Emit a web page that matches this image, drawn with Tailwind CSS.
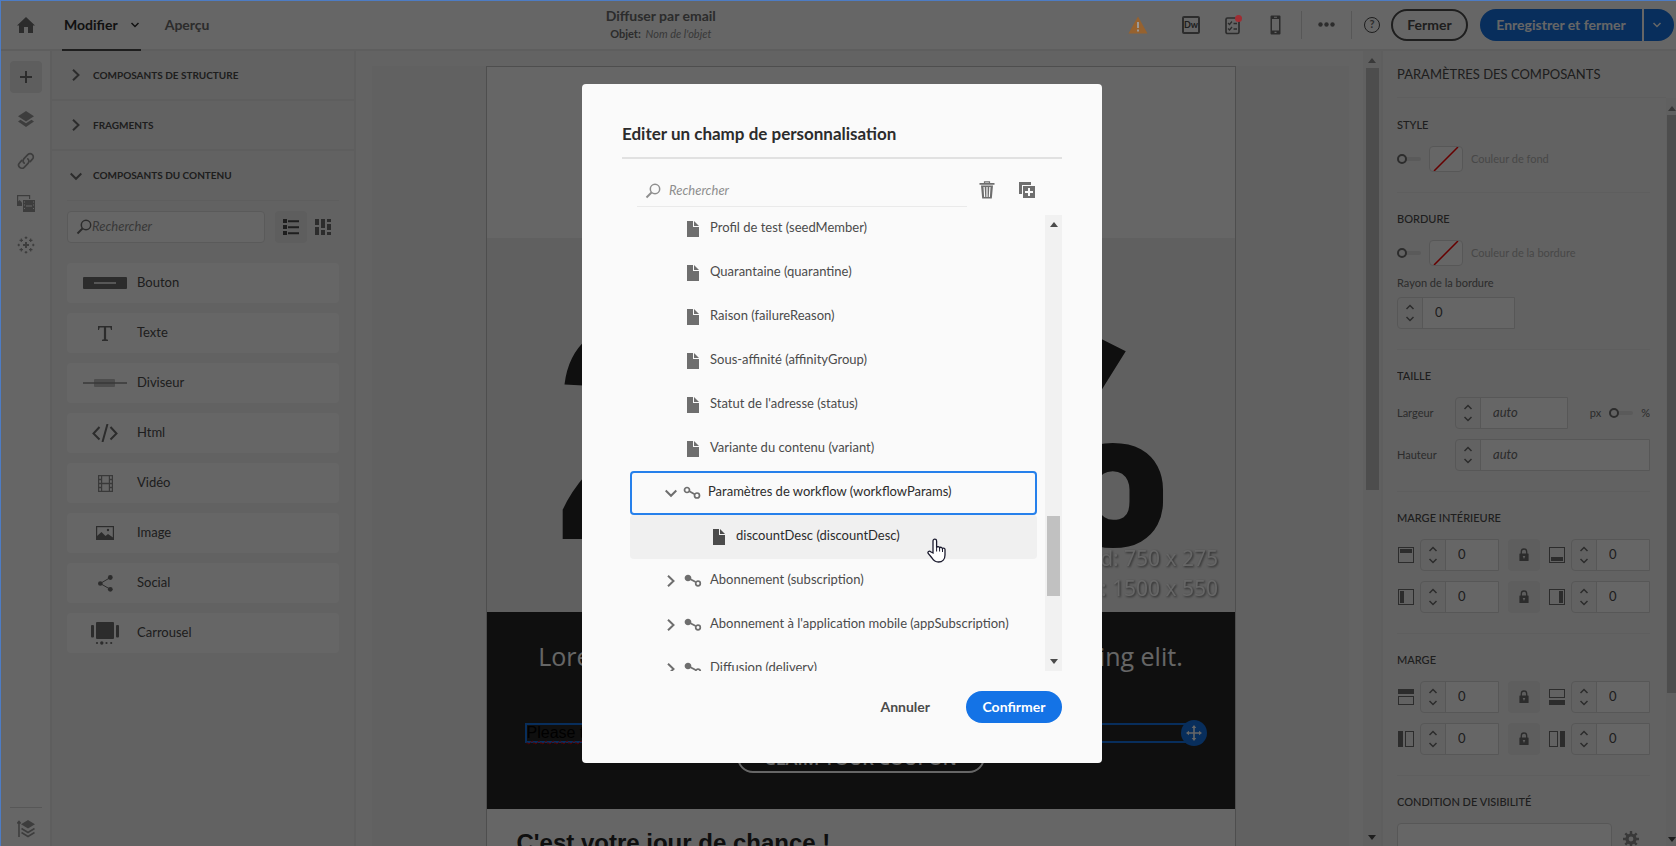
<!DOCTYPE html>
<html lang="fr">
<head>
<meta charset="utf-8">
<meta name="viewport" content="width=device-width, initial-scale=1">
<title>Diffuser par email</title>
<script src="https://cdn.jsdelivr.net/npm/@tailwindcss/browser@4"></script>
</head>
<body class="h-screen overflow-hidden bg-white font-['Lato',sans-serif] text-[13px] text-[#4b4b4b]">

<svg width="0" height="0" class="hidden" aria-hidden="true">
  <symbol id="chev-r" viewBox="0 0 12 12"><path d="M3 .7L8.500 6 3 11.300" fill="none" stroke="currentColor" stroke-width="2"/></symbol>
  <symbol id="chev-d" viewBox="0 0 12 12"><path d="M.7 3.500L6 8.800l5.300-5.300" fill="none" stroke="currentColor" stroke-width="2"/></symbol>
  <symbol id="chev-s" viewBox="0 0 10 6"><path d="M1.500 1L5 4.500 8.500 1" fill="none" stroke="currentColor" stroke-width="1.500"/></symbol>
  <symbol id="chev-u" viewBox="0 0 10 6"><path d="M1.500 5L5 1.500 8.500 5" fill="none" stroke="currentColor" stroke-width="1.500"/></symbol>
  <symbol id="glass" viewBox="0 0 16 16"><g fill="none" stroke="currentColor"><circle cx="10" cy="6" r="4.700" stroke-width="1.500"/><path d="M6.500 9.500L1.500 14.500" stroke-width="2"/></g></symbol>
  <symbol id="doc" viewBox="0 0 12 16"><path d="M0 0h6v6h6v10H0z" fill="currentColor"/><path d="M7 0l5 5H7z" fill="currentColor"/></symbol>
  <symbol id="link-o" viewBox="0 0 18 14"><g fill="none" stroke="currentColor" stroke-width="1.700"><circle cx="4" cy="4" r="2.500"/><circle cx="14" cy="9.500" r="2.500"/><path d="M6.300 5.200l5.400 3.100"/></g></symbol>
  <symbol id="link-f" viewBox="0 0 18 14"><g stroke="currentColor" stroke-width="1.700"><circle cx="4" cy="4" r="2.500" fill="currentColor"/><circle cx="14" cy="9.500" r="2.300" fill="none"/><path d="M6 5l5.700 3.100" fill="none"/></g></symbol>
  <symbol id="tri-u" viewBox="0 0 8 5"><path d="M4 0l4 5H0z" fill="currentColor"/></symbol>
  <symbol id="tri-d" viewBox="0 0 8 5"><path d="M4 5l4-5H0z" fill="currentColor"/></symbol>
  <symbol id="lock" viewBox="0 0 10 14"><path d="M2.300 6V3.700a2.700 2.700 0 015.400 0V6" fill="none" stroke="currentColor" stroke-width="1.300"/><path fill-rule="evenodd" d="M1 5.500h8a.6.6 0 01.6.6v6.300a.6.6 0 01-.6.6H1a.6.6 0 01-.6-.6V6.100a.6.6 0 01.6-.6zM3.700 8l1.300 3 1.300-3z" fill="currentColor"/></symbol>
</svg>

<div class="flex h-full flex-col">
  <!-- Top bar -->
  <header class="flex h-[51px] shrink-0 items-stretch border-b-2 border-[#eaeaea] bg-white">
    <button type="button" aria-label="Accueil" class="flex w-[52px] items-center justify-center text-[#6e6e6e]">
      <svg width="18" height="16" viewBox="0 0 18 16"><path d="M9 0l9 8.500H16V16h-5v-6H7v6H2V8.500H0z" fill="currentColor"/></svg>
    </button>
    <nav class="ml-2.5 flex items-stretch gap-6">
      <button type="button" class="-mb-0.5 flex items-center gap-3 border-b-2 border-[#4b4b4b] pr-px pl-0.5 text-sm font-bold text-[#2c2c2c]">Modifier
        <svg width="10" height="6"><use href="#chev-s"/></svg>
      </button>
      <button type="button" class="text-sm font-bold text-[#6e6e6e]">Aperçu</button>
    </nav>
    <div class="flex min-w-0 flex-1 flex-col items-center justify-center pb-0.5 text-center">
      <h1 class="text-sm leading-5 font-bold text-[#6e6e6e]">Diffuser par email</h1>
      <p class="text-[11px] leading-4"><span class="font-bold text-[#6e6e6e]">Objet:</span> <em class="ml-0.5 text-[#8e8e8e]">Nom de l'objet</em></p>
    </div>
    <div class="flex items-center">
      <svg class="relative z-50 mr-[34px] ml-4" width="20" height="18" viewBox="0 0 20 18"><path d="M10 .5L19.500 17.500H.5z" fill="#96622f"/><path d="M9 6h2v6H9zM9 13.500h2v2H9z" fill="#999"/></svg>
      <button type="button" aria-label="Dreamweaver" class="mr-6 flex size-[18px] items-center justify-center rounded-xs border-2 border-[#6e6e6e] text-[9px] font-bold text-[#4b4b4b]">Dw</button>
      <button type="button" aria-label="Contrôles" class="relative mr-7 text-[#6e6e6e]">
        <svg width="18" height="20" viewBox="0 0 18 20"><rect x="2" y="3" width="13" height="15.500" rx="1.500" fill="none" stroke="currentColor" stroke-width="1.700"/><path d="M4 8l1.500 1.500L8 6.500M4 13.500L5.500 15 8 12M9.500 8.500H13M9.500 14H13" fill="none" stroke="currentColor" stroke-width="1.300"/></svg>
        <span class="absolute top-0 right-0 z-50 size-[7px] rounded-full bg-[#a02c32]"></span>
      </button>
      <button type="button" aria-label="Mobile" class="mr-5 text-[#6e6e6e]"><svg width="11" height="20" viewBox="0 0 11 20"><path fill-rule="evenodd" d="M1.500.5h8a1 1 0 011 1v17a1 1 0 01-1 1h-8a1 1 0 01-1-1v-17a1 1 0 011-1zM2 4v11.500h7V4zM4 1.800h3v1H4zM4.500 16.700h2v1.300h-2z" fill="currentColor"/></svg></button>
      <span class="h-7 w-px bg-[#dadada]"></span>
      <button type="button" aria-label="Plus d'options" class="mx-4 text-[#6e6e6e]"><svg width="17" height="5" viewBox="0 0 17 5" fill="currentColor"><circle cx="2.500" cy="2.500" r="2.200"/><circle cx="8.500" cy="2.500" r="2.200"/><circle cx="14.500" cy="2.500" r="2.200"/></svg></button>
      <span class="h-7 w-px bg-[#dadada]"></span>
      <button type="button" aria-label="Aide" class="mr-[11px] ml-3 flex size-4 items-center justify-center rounded-full border border-[#4b4b4b] text-[11px] font-bold text-[#6e6e6e]">?</button>
      <button type="button" class="mr-3 h-8 w-[77px] rounded-full border-2 border-[#4b4b4b] text-sm font-bold text-[#4b4b4b]">Fermer</button>
      <button type="button" class="mr-0.5 h-8 w-[162px] rounded-l-full bg-[#1473e6] text-sm font-bold text-white">Enregistrer et fermer</button>
      <button type="button" aria-label="Autres actions" class="mr-0.5 flex h-8 w-[30px] items-center justify-center rounded-r-full bg-[#1473e6] pr-1 text-white"><svg width="10" height="6"><use href="#chev-s"/></svg></button>
    </div>
  </header>

  <div class="flex min-h-0 flex-1">
    <!-- Icon rail -->
    <nav class="flex w-[52px] shrink-0 flex-col items-center border-r-2 border-[#eaeaea] pt-2.5 pl-0.5 text-[#9a9a9a]">
      <button type="button" aria-label="Composants" class="mb-2.5 flex size-8 items-center justify-center rounded bg-[#eaeaea] text-[#6e6e6e]"><svg width="12" height="12" viewBox="0 0 12 12"><path d="M6 0v12M0 6h12" stroke="currentColor" stroke-width="2"/></svg></button>
      <button type="button" aria-label="Calques" class="mb-2.5 flex size-8 items-center justify-center"><svg width="16" height="16" viewBox="0 0 16 16" fill="currentColor"><path d="M8 0l8 5.200-8 5.200L0 5.200z"/><path d="M2.500 8.700L8 12.300l5.500-3.600L16 10.500 8 16 0 10.500z"/></svg></button>
      <button type="button" aria-label="Liens" class="mb-2.5 flex size-8 items-center justify-center"><svg width="18" height="18" viewBox="0 0 18 18" fill="none" stroke="currentColor" stroke-width="1.700" stroke-linecap="round"><path d="M7.200 11.200a3.300 3.300 0 01-.4-4.300l4-4.200a3.200 3.200 0 014.600 4.500l-2.200 2.400"/><path d="M10.800 6.800a3.300 3.300 0 01.4 4.300l-4 4.200a3.200 3.200 0 01-4.600-4.500l2.200-2.400"/></svg></button>
      <button type="button" aria-label="Médias" class="mb-2.5 flex size-8 items-center justify-center"><svg width="18" height="17" viewBox="0 0 18 17"><path d="M.6 10V.6h12V4" fill="none" stroke="currentColor" stroke-width="1.200"/><path d="M0 10V7.500L2.500 5 5 7.500V11H0z" fill="currentColor"/><path fill-rule="evenodd" d="M6 5h12v12H6zM7 6.500v1h1v-1zM7 9.500v1h1v-1zM7 13v1h1v-1zM16 6.500v1h1v-1zM16 9.500v1h1v-1zM16 13v1h1v-1zM9 10.500v1h6v-1z" fill="currentColor"/></svg></button>
      <button type="button" aria-label="Personnalisation" class="flex size-8 items-center justify-center"><svg width="18" height="18" viewBox="0 0 18 18" stroke="currentColor" stroke-width="1.200"><path d="M9 6v6M6 9h6" stroke-width="2"/><path d="M9 .5v2.500M7.700 1.700h2.600M9 15v2.500M7.700 16.300h2.600M.5 9H3M1.700 7.700v2.600M15 9h2.500M16.300 7.700v2.600M4.300 2.500v3.500M2.500 4.300H6M13.700 2.500v3.500M12 4.300h3.500M4.300 12v3.500M2.500 13.700H6M13.700 12v3.500M12 13.700h3.500"/></svg></button>
      <div class="mt-auto flex w-8 justify-center border-t border-[#dadada] pt-3 pb-2">
        <svg width="18" height="18" viewBox="0 0 18 18"><path d="M2 17V2M.3 3.500L2 1.500l1.700 2" fill="none" stroke="currentColor" stroke-width="1.600"/><path d="M11 0l7 4.300-7 4.300-7-4.300z" fill="currentColor"/><path d="M4.500 8.500L11 12.500l6.500-4M4.500 12.500L11 16.500l6.500-4" fill="none" stroke="currentColor" stroke-width="1.600"/></svg>
      </div>
    </nav>

    <!-- Component palette -->
    <aside class="flex w-[304px] shrink-0 flex-col border-r-2 border-[#eaeaea] bg-[#f5f5f5]">
      <button type="button" class="flex h-[50px] shrink-0 items-center gap-[11px] border-b-2 border-[#eaeaea] pl-[18px] text-[10px] font-bold"><svg width="12" height="12" class="text-[#6e6e6e]"><use href="#chev-r"/></svg>COMPOSANTS DE STRUCTURE</button>
      <button type="button" class="flex h-[50px] shrink-0 items-center gap-[11px] border-b-2 border-[#eaeaea] pl-[18px] text-[10px] font-bold"><svg width="12" height="12" class="text-[#6e6e6e]"><use href="#chev-r"/></svg>FRAGMENTS</button>
      <button type="button" class="flex h-[49px] shrink-0 items-center gap-[11px] pl-[18px] text-[10px] font-bold"><svg width="12" height="12" class="text-[#6e6e6e]"><use href="#chev-d"/></svg>COMPOSANTS DU CONTENU</button>
      <div class="mx-[15px] border-t border-[#eaeaea] pt-2.5">
        <div class="flex items-center gap-2.5">
          <label class="flex h-8 w-[198px] items-center rounded border border-[#e1e1e1] bg-white pl-2 text-[#6e6e6e]">
            <svg width="16" height="16"><use href="#glass"/></svg>
            <input type="search" aria-label="Rechercher un composant" placeholder="Rechercher" class="min-w-0 flex-1 bg-transparent text-[13px] italic outline-none placeholder:text-[#8e8e8e]">
          </label>
          <button type="button" aria-label="Liste" class="flex size-8 items-center justify-center rounded bg-[#eaeaea]"><svg width="16" height="16" viewBox="0 0 16 16" fill="currentColor"><path d="M0 0h4v4H0zM0 6h4v4H0zM0 12h4v4H0zM5 1.200h11v2H5zM5 7.200h11v2H5zM5 13.200h11v2H5z"/></svg></button>
          <button type="button" aria-label="Grille" class="-ml-0.5 text-[#6e6e6e]"><svg width="16" height="16" viewBox="0 0 16 16" fill="currentColor"><path d="M0 0h4v6H0zM0 8h4v8H0zM6 0h4v9H6zM6 11h4v5H6zM12 0h4v3h-4zM12 5h4v6h-4zM12 13h4v3h-4z"/></svg></button>
        </div>
        <ul class="mt-5 flex flex-col gap-2.5">
          <li class="flex h-10 items-center rounded bg-white pl-4"><span class="mr-2.5 flex w-11 justify-center text-[#6e6e6e]"><svg width="44" height="12" viewBox="0 0 44 12"><rect width="44" height="12" rx="1" fill="currentColor"/><path d="M11 6h22" stroke="#fff" stroke-width="1.500"/></svg></span>Bouton</li>
          <li class="flex h-10 items-center rounded bg-white pl-4"><span class="mr-2.5 flex w-11 justify-center text-[#6e6e6e]"><svg width="14" height="15" viewBox="0 0 14 15" fill="currentColor"><path d="M0 0h14v4h-1l-.7-2.400H8.100v11.600l1.900.5v1.300H4v-1.300l1.900-.5V1.600H1.700L1 4H0z"/></svg></span>Texte</li>
          <li class="flex h-10 items-center rounded bg-white pl-4"><span class="mr-2.5 flex w-11 justify-center text-[#8e8e8e]"><svg width="44" height="8" viewBox="0 0 44 8"><rect x="11" width="21" height="8" rx="1" fill="#c0c0c0"/><path d="M0 4h44" stroke="currentColor" stroke-width="1.600"/></svg></span>Diviseur</li>
          <li class="flex h-10 items-center rounded bg-white pl-4"><span class="mr-2.5 flex w-11 justify-center text-[#6e6e6e]"><svg width="26" height="18" viewBox="0 0 26 18" fill="none" stroke="currentColor" stroke-width="2"><path d="M7.500 3L1.500 9.500l6 6M18.500 3l6 6.500-6 6M15.500 0l-5 18"/></svg></span>Html</li>
          <li class="flex h-10 items-center rounded bg-white pl-4"><span class="mr-2.5 flex w-11 justify-center text-[#8e8e8e]"><svg width="15" height="17" viewBox="0 0 15 17" fill="none" stroke="currentColor"><path d="M.6.6h13.800v15.800H.6zM3.600.6v15.800M11.400.6v15.800" stroke-width="1.200"/><path d="M3.600 8.500h7.800M.6 4.500h3M.6 8.500h3M.6 12.500h3M11.400 4.500h3M11.400 8.500h3M11.400 12.500h3" stroke-width="1.500"/></svg></span>Vidéo</li>
          <li class="flex h-10 items-center rounded bg-white pl-4"><span class="mr-2.5 flex w-11 justify-center text-[#6e6e6e]"><svg width="18" height="14" viewBox="0 0 18 14"><rect x=".6" y=".6" width="16.800" height="12.800" fill="none" stroke="currentColor" stroke-width="1.200"/><path d="M1 10l4.500-4 4 4 2.500-2 5 3.500V13H1z" fill="currentColor"/><circle cx="12" cy="4" r="1.200" fill="currentColor"/></svg></span>Image</li>
          <li class="flex h-10 items-center rounded bg-white pl-4"><span class="mr-2.5 flex w-11 justify-center text-[#6e6e6e]"><svg width="15" height="17" viewBox="0 0 15 17" fill="currentColor"><circle cx="2.300" cy="8.500" r="2.300"/><circle cx="12.300" cy="2.500" r="2.400"/><circle cx="12.300" cy="14.300" r="2.400"/><path d="M12.300 2.500L2.300 8.500l10 5.800" fill="none" stroke="currentColor"/></svg></span>Social</li>
          <li class="flex h-10 items-center rounded bg-white pl-4"><span class="mr-2.5 flex w-11 justify-center text-[#6e6e6e]"><svg width="28" height="23" viewBox="0 0 28 23" fill="currentColor"><rect x="5" width="18" height="17" rx="1"/><rect y="3" width="3" height="12.500" rx="1"/><rect x="25" y="3" width="3" height="12.500" rx="1"/><circle cx="6" cy="21" r="1.100"/><circle cx="10.800" cy="21" r="1.700"/><circle cx="15.500" cy="21" r="1.100"/><circle cx="20.200" cy="21" r="1.100"/></svg></span>Carrousel</li>
        </ul>
      </div>
    </aside>

    <!-- Email canvas -->
    <main class="flex min-w-0 flex-1 bg-[#f8f8f8]">
      <div class="min-w-0 flex-1 overflow-hidden pt-[15px] pr-3.5 pl-4">
        <div class="flex h-full justify-center bg-[#f3f3f3]">
          <article class="flex w-[750px] shrink-0 flex-col border-x border-t border-[#c4c4c4] bg-white">
            <div class="h-[171px] shrink-0"></div>
            <svg class="w-full shrink-0" viewBox="0 0 748 374" role="img" aria-label="Bannière 20 %">
              <rect width="748" height="374" fill="#f0f0f0"/>
              <text x="65" y="301" font-family="Liberation Sans" font-weight="700" font-size="308" fill="#262626">20</text>
              <text x="690" y="307" font-family="Roboto" font-weight="900" font-size="318" text-anchor="end" fill="#262626">%</text>
              <g class="drop-shadow-[1px_1px_1px_#666]" font-family="Open Sans" font-size="21" text-anchor="end" fill="#fff">
                <text x="731" y="328">Standard: 750 x 275</text>
                <text x="731" y="358">Retina: 1500 x 550</text>
              </g>
            </svg>
            <section class="flex h-[197px] shrink-0 flex-col items-center bg-[#262626] px-[38px]">
              <p class="pt-6 font-['Open_Sans',sans-serif] text-[25px] leading-10 whitespace-nowrap text-white">Lorem ipsum dolor sit amet, consectetur adipiscing elit.</p>
              <div class="relative mt-[47px] flex h-5 w-full items-center border-2 border-[#1473e6] font-['Liberation_Sans',sans-serif] text-base leading-4 text-black">
                <p class="underline decoration-[#e00] decoration-wavy decoration-1 underline-offset-2">Please take advantage of this offer</p>
                <span class="absolute -top-[5px] -right-3 flex size-[26px] items-center justify-center rounded-full bg-[#1473e6] text-white"><svg width="16" height="16" viewBox="0 0 16 16"><path d="M8 2v12M2 8h12" stroke="currentColor" stroke-width="1.600"/><path d="M8 0l2.300 3H5.700zM8 16l2.300-3H5.700zM0 8l3-2.300v4.600zM16 8l-3-2.300v4.600z" fill="currentColor"/></svg></span>
              </div>
              <a href="#" class="-mt-3 flex h-[42px] w-[248px] shrink-0 items-center justify-center rounded-2xl border-2 border-white pt-3 font-['Open_Sans',sans-serif] text-lg leading-none font-semibold whitespace-nowrap text-white">CLAIM YOUR COUPON</a>
            </section>
            <h2 class="pt-[18px] pl-[30px] font-['Liberation_Sans',sans-serif] text-2xl leading-8 font-bold text-[#262626]">C'est votre jour de chance !</h2>
          </article>
        </div>
      </div>
      <div class="flex w-[18px] shrink-0 flex-col items-center bg-[#f1f1f1] pt-[7px] pb-1.5 text-[#4b4b4b]" aria-hidden="true">
        <svg width="8" height="5" class="mb-[5px] shrink-0 text-[#8e8e8e]"><use href="#tri-u"/></svg>
        <div class="h-[422px] w-[13px] bg-[#c1c1c1]"></div>
        <svg width="8" height="5" class="mt-auto shrink-0"><use href="#tri-d"/></svg>
      </div>
    </main>

    <!-- Settings -->
    <aside class="flex w-[295px] shrink-0 flex-col overflow-hidden border-l-2 border-[#eaeaea] bg-[#f5f5f5] text-[11px]">
      <h2 class="mr-2.5 ml-3.5 flex h-[47px] shrink-0 items-center border-b border-[#eaeaea] pt-0.5 text-[13px] text-[#4b4b4b]">PARAMÈTRES DES COMPOSANTS</h2>
      <div class="flex min-h-0 flex-1">
        <div class="mr-4 ml-3.5 min-w-0 flex-1 overflow-hidden">
          <section class="border-b border-[#eaeaea] pt-[19px] pb-5">
            <h3 class="mb-[13px] leading-4 font-medium text-[#4b4b4b]">STYLE</h3>
            <div class="flex h-[26px] items-center gap-2">
              <input type="checkbox" aria-label="Activer la couleur de fond" class="relative h-3 w-6 appearance-none before:absolute before:top-1 before:left-1.5 before:h-1 before:w-[18px] before:rounded-full before:bg-[#e1e1e1] after:absolute after:top-px after:left-0 after:size-2.5 after:rounded-full after:border-2 after:border-[#6e6e6e] after:bg-[#f5f5f5]">
              <button type="button" aria-label="Couleur de fond" class="h-[26px] w-[34px] rounded border border-[#dadada] bg-white"><svg width="32" height="24"><path d="M4 24L28 0" stroke="#ff0000" stroke-width="1.500"/></svg></button>
              <span class="text-[#b3b3b3]">Couleur de fond</span>
            </div>
          </section>
          <section class="border-b border-[#eaeaea] pt-[18px] pb-5">
            <h3 class="mb-[13px] leading-4 font-medium text-[#4b4b4b]">BORDURE</h3>
            <div class="flex h-[26px] items-center gap-2">
              <input type="checkbox" aria-label="Activer la couleur de la bordure" class="relative h-3 w-6 appearance-none before:absolute before:top-1 before:left-1.5 before:h-1 before:w-[18px] before:rounded-full before:bg-[#e1e1e1] after:absolute after:top-px after:left-0 after:size-2.5 after:rounded-full after:border-2 after:border-[#6e6e6e] after:bg-[#f5f5f5]">
              <button type="button" aria-label="Couleur de la bordure" class="h-[26px] w-[34px] rounded border border-[#dadada] bg-white"><svg width="32" height="24"><path d="M4 24L28 0" stroke="#ff0000" stroke-width="1.500"/></svg></button>
              <span class="text-[#b3b3b3]">Couleur de la bordure</span>
            </div>
            <label for="radius" class="mt-[9px] mb-1.5 block leading-4 text-[#6e6e6e]">Rayon de la bordure</label>
            <div class="flex h-8 w-[118px] rounded-l border border-[#dadada]">
              <div class="flex w-[25px] flex-col items-center justify-between border-r border-[#dadada] py-1.5 text-[#6e6e6e]"><button type="button" aria-label="Augmenter"><svg width="10" height="6" class="block"><use href="#chev-u"/></svg></button><button type="button" aria-label="Diminuer"><svg width="10" height="6" class="block"><use href="#chev-s"/></svg></button></div>
              <input id="radius" type="text" value="0" class="w-0 min-w-0 flex-1 bg-white pl-3 text-[13px] outline-none">
            </div>
          </section>
          <section class="border-b border-[#eaeaea] pt-[18px] pb-5">
            <h3 class="mb-[13px] leading-4 font-medium text-[#4b4b4b]">TAILLE</h3>
            <div class="flex items-center justify-between">
              <label for="width" class="w-[58px] text-[#6e6e6e]">Largeur</label>
              <div class="flex h-8 w-[113px] rounded-l border border-[#dadada]">
                <div class="flex w-[25px] flex-col items-center justify-between border-r border-[#dadada] py-1.5 text-[#6e6e6e]"><button type="button" aria-label="Augmenter"><svg width="10" height="6" class="block"><use href="#chev-u"/></svg></button><button type="button" aria-label="Diminuer"><svg width="10" height="6" class="block"><use href="#chev-s"/></svg></button></div>
                <input id="width" type="text" placeholder="auto" class="w-0 min-w-0 flex-1 bg-white pl-3 text-[13px] italic outline-none placeholder:text-[#6e6e6e]">
              </div>
              <div class="ml-auto flex items-center gap-2 text-[#6e6e6e]"><span>px</span>
                <input type="checkbox" aria-label="Unité en pourcentage" class="relative h-3 w-6 appearance-none before:absolute before:top-1 before:left-1.5 before:h-1 before:w-[18px] before:rounded-full before:bg-[#e1e1e1] after:absolute after:top-px after:left-0 after:size-2.5 after:rounded-full after:border-2 after:border-[#6e6e6e] after:bg-[#f5f5f5]">
                <span>%</span></div>
            </div>
            <div class="mt-2.5 flex items-center">
              <label for="height" class="w-[58px] text-[#6e6e6e]">Hauteur</label>
              <div class="flex h-8 flex-1 rounded-l border border-[#dadada]">
                <div class="flex w-[25px] flex-col items-center justify-between border-r border-[#dadada] py-1.5 text-[#6e6e6e]"><button type="button" aria-label="Augmenter"><svg width="10" height="6" class="block"><use href="#chev-u"/></svg></button><button type="button" aria-label="Diminuer"><svg width="10" height="6" class="block"><use href="#chev-s"/></svg></button></div>
                <input id="height" type="text" placeholder="auto" class="w-0 min-w-0 flex-1 bg-white pl-3 text-[13px] italic outline-none placeholder:text-[#6e6e6e]">
              </div>
            </div>
          </section>
          <section class="border-b border-[#eaeaea] pt-[18px] pb-5">
            <h3 class="mb-[13px] leading-4 font-medium text-[#4b4b4b]">MARGE INTÉRIEURE</h3>
            <div class="flex flex-col gap-2.5 text-[#6e6e6e]">
              <div class="flex items-center pl-px">
                <svg width="16" height="16" class="mr-1.5 shrink-0"><rect x=".5" y=".5" width="15" height="15" fill="none" stroke="currentColor"/><path d="M2 2h12v4H2z" fill="currentColor"/></svg>
                <div class="flex h-8 flex-1 rounded-l border border-[#dadada]"><div class="flex w-[25px] flex-col items-center justify-between border-r border-[#dadada] py-1.5"><button type="button" aria-label="Augmenter"><svg width="10" height="6" class="block"><use href="#chev-u"/></svg></button><button type="button" aria-label="Diminuer"><svg width="10" height="6" class="block"><use href="#chev-s"/></svg></button></div><input aria-label="Marge intérieure haute" type="text" value="0" class="w-0 min-w-0 flex-1 bg-white pl-3 text-[13px] text-[#4b4b4b] outline-none"></div>
                <button type="button" aria-label="Verrouiller" class="mx-[9px] flex size-8 items-center justify-center rounded bg-[#eaeaea]"><svg width="10" height="14"><use href="#lock"/></svg></button>
                <svg width="16" height="16" class="mr-1.5 shrink-0"><rect x=".5" y=".5" width="15" height="15" fill="none" stroke="currentColor"/><path d="M2 10h12v4H2z" fill="currentColor"/></svg>
                <div class="flex h-8 flex-1 rounded-l border border-[#dadada]"><div class="flex w-[25px] flex-col items-center justify-between border-r border-[#dadada] py-1.5"><button type="button" aria-label="Augmenter"><svg width="10" height="6" class="block"><use href="#chev-u"/></svg></button><button type="button" aria-label="Diminuer"><svg width="10" height="6" class="block"><use href="#chev-s"/></svg></button></div><input aria-label="Marge intérieure basse" type="text" value="0" class="w-0 min-w-0 flex-1 bg-white pl-3 text-[13px] text-[#4b4b4b] outline-none"></div>
              </div>
              <div class="flex items-center pl-px">
                <svg width="16" height="16" class="mr-1.5 shrink-0"><rect x=".5" y=".5" width="15" height="15" fill="none" stroke="currentColor"/><path d="M2 2h4v12H2z" fill="currentColor"/></svg>
                <div class="flex h-8 flex-1 rounded-l border border-[#dadada]"><div class="flex w-[25px] flex-col items-center justify-between border-r border-[#dadada] py-1.5"><button type="button" aria-label="Augmenter"><svg width="10" height="6" class="block"><use href="#chev-u"/></svg></button><button type="button" aria-label="Diminuer"><svg width="10" height="6" class="block"><use href="#chev-s"/></svg></button></div><input aria-label="Marge intérieure gauche" type="text" value="0" class="w-0 min-w-0 flex-1 bg-white pl-3 text-[13px] text-[#4b4b4b] outline-none"></div>
                <button type="button" aria-label="Verrouiller" class="mx-[9px] flex size-8 items-center justify-center rounded bg-[#eaeaea]"><svg width="10" height="14"><use href="#lock"/></svg></button>
                <svg width="16" height="16" class="mr-1.5 shrink-0"><rect x=".5" y=".5" width="15" height="15" fill="none" stroke="currentColor"/><path d="M10 2h4v12h-4z" fill="currentColor"/></svg>
                <div class="flex h-8 flex-1 rounded-l border border-[#dadada]"><div class="flex w-[25px] flex-col items-center justify-between border-r border-[#dadada] py-1.5"><button type="button" aria-label="Augmenter"><svg width="10" height="6" class="block"><use href="#chev-u"/></svg></button><button type="button" aria-label="Diminuer"><svg width="10" height="6" class="block"><use href="#chev-s"/></svg></button></div><input aria-label="Marge intérieure droite" type="text" value="0" class="w-0 min-w-0 flex-1 bg-white pl-3 text-[13px] text-[#4b4b4b] outline-none"></div>
              </div>
            </div>
          </section>
          <section class="border-b border-[#eaeaea] pt-[18px] pb-5">
            <h3 class="mb-[13px] leading-4 font-medium text-[#4b4b4b]">MARGE</h3>
            <div class="flex flex-col gap-2.5 text-[#6e6e6e]">
              <div class="flex items-center pl-px">
                <svg width="16" height="16" class="mr-1.5 shrink-0"><rect x=".5" y="7.500" width="15" height="8" fill="none" stroke="currentColor"/><path d="M0 0h16v5H0z" fill="currentColor"/></svg>
                <div class="flex h-8 flex-1 rounded-l border border-[#dadada]"><div class="flex w-[25px] flex-col items-center justify-between border-r border-[#dadada] py-1.5"><button type="button" aria-label="Augmenter"><svg width="10" height="6" class="block"><use href="#chev-u"/></svg></button><button type="button" aria-label="Diminuer"><svg width="10" height="6" class="block"><use href="#chev-s"/></svg></button></div><input aria-label="Marge haute" type="text" value="0" class="w-0 min-w-0 flex-1 bg-white pl-3 text-[13px] text-[#4b4b4b] outline-none"></div>
                <button type="button" aria-label="Verrouiller" class="mx-[9px] flex size-8 items-center justify-center rounded bg-[#eaeaea]"><svg width="10" height="14"><use href="#lock"/></svg></button>
                <svg width="16" height="16" class="mr-1.5 shrink-0"><rect x=".5" y=".5" width="15" height="8" fill="none" stroke="currentColor"/><path d="M0 11h16v5H0z" fill="currentColor"/></svg>
                <div class="flex h-8 flex-1 rounded-l border border-[#dadada]"><div class="flex w-[25px] flex-col items-center justify-between border-r border-[#dadada] py-1.5"><button type="button" aria-label="Augmenter"><svg width="10" height="6" class="block"><use href="#chev-u"/></svg></button><button type="button" aria-label="Diminuer"><svg width="10" height="6" class="block"><use href="#chev-s"/></svg></button></div><input aria-label="Marge basse" type="text" value="0" class="w-0 min-w-0 flex-1 bg-white pl-3 text-[13px] text-[#4b4b4b] outline-none"></div>
              </div>
              <div class="flex items-center pl-px">
                <svg width="16" height="16" class="mr-1.5 shrink-0"><rect x="7.500" y=".5" width="8" height="15" fill="none" stroke="currentColor"/><path d="M0 0h5v16H0z" fill="currentColor"/></svg>
                <div class="flex h-8 flex-1 rounded-l border border-[#dadada]"><div class="flex w-[25px] flex-col items-center justify-between border-r border-[#dadada] py-1.5"><button type="button" aria-label="Augmenter"><svg width="10" height="6" class="block"><use href="#chev-u"/></svg></button><button type="button" aria-label="Diminuer"><svg width="10" height="6" class="block"><use href="#chev-s"/></svg></button></div><input aria-label="Marge gauche" type="text" value="0" class="w-0 min-w-0 flex-1 bg-white pl-3 text-[13px] text-[#4b4b4b] outline-none"></div>
                <button type="button" aria-label="Verrouiller" class="mx-[9px] flex size-8 items-center justify-center rounded bg-[#eaeaea]"><svg width="10" height="14"><use href="#lock"/></svg></button>
                <svg width="16" height="16" class="mr-1.5 shrink-0"><rect x=".5" y=".5" width="8" height="15" fill="none" stroke="currentColor"/><path d="M11 0h5v16h-5z" fill="currentColor"/></svg>
                <div class="flex h-8 flex-1 rounded-l border border-[#dadada]"><div class="flex w-[25px] flex-col items-center justify-between border-r border-[#dadada] py-1.5"><button type="button" aria-label="Augmenter"><svg width="10" height="6" class="block"><use href="#chev-u"/></svg></button><button type="button" aria-label="Diminuer"><svg width="10" height="6" class="block"><use href="#chev-s"/></svg></button></div><input aria-label="Marge droite" type="text" value="0" class="w-0 min-w-0 flex-1 bg-white pl-3 text-[13px] text-[#4b4b4b] outline-none"></div>
              </div>
            </div>
          </section>
          <section class="pt-[18px]">
            <h3 class="mb-[13px] leading-4 font-medium text-[#4b4b4b]">CONDITION DE VISIBILITÉ</h3>
            <div class="flex gap-[11px]">
              <textarea aria-label="Condition de visibilité" class="h-20 w-[215px] resize-none rounded border border-[#dadada] bg-white p-2"></textarea>
              <button type="button" aria-label="Modifier la condition" class="h-8 text-[#8e8e8e]"><svg width="16" height="16" viewBox="0 0 16 16"><circle cx="8" cy="8" r="4" fill="none" stroke="currentColor" stroke-width="3.200"/><path d="M8 0v3M8 13v3M0 8h3M13 8h3M2.300 2.300l2.200 2.200M11.500 11.500l2.200 2.200M13.700 2.300l-2.200 2.200M4.500 11.500l-2.200 2.200" stroke="currentColor" stroke-width="2.400"/></svg></button>
            </div>
          </section>
        </div>
        <div class="flex w-2.5 shrink-0 flex-col items-end overflow-hidden bg-[#f1f1f1] pt-2 pb-1" aria-hidden="true">
          <svg width="8" height="5" class="mb-1 shrink-0 text-[#8e8e8e]"><use href="#tri-u"/></svg>
          <div class="h-[578px] w-[9px] bg-[#c1c1c1]"></div>
          <svg width="8" height="5" class="mt-auto shrink-0"><use href="#tri-d"/></svg>
        </div>
      </div>
    </aside>
  </div>
</div>

<!-- Personalisation dialog -->
<div class="fixed inset-0 z-40 flex items-center justify-center bg-black/60 pt-px pl-2">
  <div role="dialog" aria-modal="true" aria-labelledby="dlg-title" class="flex w-[520px] flex-col rounded bg-[#fafafa] px-10 pt-[38px] pb-10">
    <h2 id="dlg-title" class="border-b-2 border-[#e1e1e1] pb-[11px] text-[17px] leading-6 font-bold text-[#2c2c2c]">Editer un champ de personnalisation</h2>
    <div class="mt-4 mb-2 flex items-start pl-[15px]">
      <label class="flex h-8 w-[330px] items-center gap-2 border-b border-[#eaeaea] pl-2 text-[#8e8e8e]">
        <svg width="16" height="16"><use href="#glass"/></svg>
        <input type="search" aria-label="Rechercher un champ" placeholder="Rechercher" class="min-w-0 flex-1 bg-transparent text-[13px] italic outline-none placeholder:text-[#8e8e8e]">
      </label>
      <button type="button" aria-label="Supprimer" class="mt-1.5 ml-3 text-[#6e6e6e]"><svg width="16" height="18" viewBox="0 0 16 18"><path d="M5.500 2V.8h5V2" fill="none" stroke="currentColor" stroke-width="1.200"/><path fill-rule="evenodd" d="M.5 2h15v1.700H.5zM2 4.500h12L12.800 17.500H3.200zM4.500 6l.6 10h1.100L5.700 6zM7.400 6v10h1.200V6zM10.300 6l-.5 10h1.100l.6-10z" fill="currentColor"/></svg></button>
      <button type="button" aria-label="Ajouter" class="mt-[7px] ml-6 text-[#6e6e6e]"><svg width="16" height="16" viewBox="0 0 16 16" fill="currentColor"><path d="M0 0h12v3H3v9H0z"/><path fill-rule="evenodd" d="M4 4h12v12H4zM9 6v3H6v2h3v3h2v-3h3V9h-3V6z"/></svg></button>
    </div>
    <div class="flex h-[456px]">
      <ul role="tree" aria-label="Champs" class="ml-2 w-[407px] overflow-hidden">
        <li role="treeitem" class="-mt-2 flex h-11 items-center gap-[11px] pl-[57px]"><svg width="12" height="16" class="text-[#6e6e6e]"><use href="#doc"/></svg><span class="pb-0.5">Profil de test (seedMember)</span></li>
        <li role="treeitem" class="flex h-11 items-center gap-[11px] pl-[57px]"><svg width="12" height="16" class="text-[#6e6e6e]"><use href="#doc"/></svg><span class="pb-0.5">Quarantaine (quarantine)</span></li>
        <li role="treeitem" class="flex h-11 items-center gap-[11px] pl-[57px]"><svg width="12" height="16" class="text-[#6e6e6e]"><use href="#doc"/></svg><span class="pb-0.5">Raison (failureReason)</span></li>
        <li role="treeitem" class="flex h-11 items-center gap-[11px] pl-[57px]"><svg width="12" height="16" class="text-[#6e6e6e]"><use href="#doc"/></svg><span class="pb-0.5">Sous-affinité (affinityGroup)</span></li>
        <li role="treeitem" class="flex h-11 items-center gap-[11px] pl-[57px]"><svg width="12" height="16" class="text-[#6e6e6e]"><use href="#doc"/></svg><span class="pb-0.5">Statut de l'adresse (status)</span></li>
        <li role="treeitem" class="flex h-11 items-center gap-[11px] pl-[57px]"><svg width="12" height="16" class="text-[#6e6e6e]"><use href="#doc"/></svg><span class="pb-0.5">Variante du contenu (variant)</span></li>
        <li role="treeitem" aria-expanded="true" class="flex h-11 items-center rounded border-2 border-[#2680eb] pl-[33px] text-[#2c2c2c]"><svg width="12" height="12" class="text-[#6e6e6e]"><use href="#chev-d"/></svg><svg width="18" height="14" class="mr-[7px] ml-1.5 text-[#6e6e6e]"><use href="#link-o"/></svg><span class="pb-0.5">Paramètres de workflow (workflowParams)</span></li>
        <li role="treeitem" class="flex h-11 items-center gap-[11px] rounded bg-[#f0f0f0] pl-[83px] text-[#2c2c2c]"><svg width="12" height="16" class="text-[#4b4b4b]"><use href="#doc"/></svg><span class="pb-0.5">discountDesc (discountDesc)</span></li>
        <li role="treeitem" aria-expanded="false" class="flex h-11 items-center pl-[35px]"><svg width="12" height="12" class="text-[#6e6e6e]"><use href="#chev-r"/></svg><svg width="18" height="14" class="mr-2 ml-[7px] text-[#6e6e6e]"><use href="#link-f"/></svg><span class="pb-0.5">Abonnement (subscription)</span></li>
        <li role="treeitem" aria-expanded="false" class="flex h-11 items-center pl-[35px]"><svg width="12" height="12" class="text-[#6e6e6e]"><use href="#chev-r"/></svg><svg width="18" height="14" class="mr-2 ml-[7px] text-[#6e6e6e]"><use href="#link-f"/></svg><span class="pb-0.5 whitespace-nowrap">Abonnement à l'application mobile (appSubscription)</span></li>
        <li role="treeitem" aria-expanded="false" class="flex h-11 items-center pl-[35px]"><svg width="12" height="12" class="text-[#6e6e6e]"><use href="#chev-r"/></svg><svg width="18" height="14" class="mr-2 ml-[7px] text-[#6e6e6e]"><use href="#link-f"/></svg><span class="pb-0.5">Diffusion (delivery)</span></li>
      </ul>
      <div class="ml-auto flex w-[17px] flex-col items-center bg-[#f1f1f1] py-[7px]" aria-hidden="true">
        <svg width="8" height="5" class="shrink-0"><use href="#tri-u"/></svg>
        <div class="mt-[289px] h-20 w-[13px] shrink-0 bg-[#c1c1c1]"></div>
        <svg width="8" height="5" class="mt-auto shrink-0"><use href="#tri-d"/></svg>
      </div>
    </div>
    <div class="mt-5 flex items-center justify-end gap-5">
      <button type="button" class="h-8 px-4 text-sm font-bold text-[#4b4b4b]">Annuler</button>
      <button type="button" class="h-8 w-24 rounded-full bg-[#1473e6] text-sm font-bold text-white">Confirmer</button>
    </div>
  </div>
</div>

<!-- Pointer over the hovered row -->
<svg class="pointer-events-none fixed top-[538px] left-[927px] z-50" width="19" height="25" viewBox="0 0 19 25" aria-hidden="true"><path d="M6 15V3a1.800 1.800 0 013.600 0v6.500a1.600 1.600 0 013 .3 1.600 1.600 0 012.800.8 1.500 1.500 0 012.600 1.200V17c0 4-2.500 7-6.500 7-3.500 0-5-1.500-6.500-4L1.200 15.500c-.9-1.600 1-3.100 2.500-1.700z" fill="#fff" stroke="#1b1b2e" stroke-width="1.300"/><path d="M9.600 9v4.500M12.600 10v3.500M15.500 11v3" stroke="#1b1b2e"/></svg>

<!-- Window frame -->
<div class="pointer-events-none fixed inset-0 z-50 border-t border-l border-[#4d7cc4]"></div>
</body>
</html>
